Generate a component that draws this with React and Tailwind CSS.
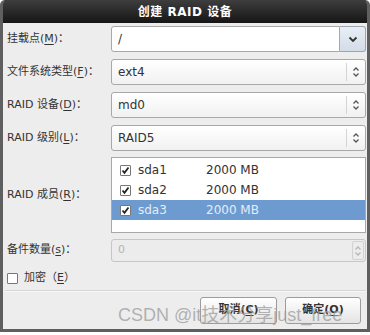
import React from "react";

const FONT = { fontFamily: '"DejaVu Sans", "Noto Sans CJK SC", sans-serif' };

function Mn({ c }) {
  return <span className="underline underline-offset-[2px]">{c}</span>;
}

function UpDown({ color = "#555" }) {
  return (
    <svg width="8" height="12" viewBox="0 0 8 12">
      <path d="M1.5 4.5 L4 2 L6.5 4.5" fill="none" stroke={color} strokeWidth="1.3" />
      <path d="M1.5 7.5 L4 10 L6.5 7.5" fill="none" stroke={color} strokeWidth="1.3" />
    </svg>
  );
}

function Combo({ value }) {
  return (
    <div className="h-[26px] flex items-center rounded-[3px] border border-[#a8a8a8] bg-gradient-to-b from-white to-[#f1f1f1] shadow-[inset_0_1px_0_#ffffff]">
      <span className="flex-1 pl-[6px] text-[12px] text-[#333]">{value}</span>
      <div className="w-px h-[18px] bg-[#d4d4d4]" />
      <div className="w-[18px] flex justify-center items-center">
        <UpDown />
      </div>
    </div>
  );
}

function Check({ checked }) {
  return (
    <div className="w-[11px] h-[11px] border border-[#777] bg-white flex items-center justify-center rounded-[1px]">
      {checked && (
        <svg width="9" height="9" viewBox="0 0 9 9">
          <path d="M1.5 4.5 L3.5 6.8 L7.5 1.5" fill="none" stroke="#222" strokeWidth="1.8" />
        </svg>
      )}
    </div>
  );
}

function Row({ label, children, h = "h-[26px]", mt }) {
  return (
    <div className={`flex items-center ${mt}`}>
      <div className="w-[106px] pl-[2px] text-[11px] text-[#333] whitespace-nowrap">{label}</div>
      <div className={`flex-1 ${h}`}>{children}</div>
    </div>
  );
}

function ListRow({ name, size, selected }) {
  return (
    <div className={`h-[20px] flex items-center ${selected ? "bg-[#6d9bd0] text-[#e4ecf6]" : "text-[#333]"}`}>
      <div className="w-[25px] flex justify-center pl-[1px]">
        <Check checked />
      </div>
      <span className="w-[69px] text-[12px] pl-[1px]">{name}</span>
      <span className="text-[12px]">{size}</span>
    </div>
  );
}

export default function App() {
  return (
    <div className="w-[370px] h-[335px] bg-white relative overflow-hidden" style={FONT}>
      <div className="h-[332px] flex flex-col rounded-t-[5px] border-x-[3px] border-b-[3px] border-[#5f5f5f] bg-[#ededed] overflow-hidden">
        <div className="h-[23px] shrink-0 bg-gradient-to-b from-[#3e3e3e] to-[#161616] flex items-center justify-center">
          <span className="text-white text-[12px] font-bold tracking-[0.5px]">创建 RAID 设备</span>
        </div>
        <div className="flex flex-col pl-[2px] pr-[1px]">
          <Row mt="mt-[3px]" label={<>挂载点(<Mn c="M" />)：</>}>
            <div className="h-full flex">
              <div className="flex-1 flex items-center rounded-l-[3px] border border-[#a8a8a8] bg-white pl-[6px] text-[12px] text-[#333]">/</div>
              <div className="w-[26px] flex items-center justify-center rounded-r-[3px] border border-l-0 border-[#9aa6b4] bg-gradient-to-b from-[#e8eef5] to-[#d3dde8]">
                <svg width="10" height="7" viewBox="0 0 10 7">
                  <path d="M1.5 1.5 L5 5 L8.5 1.5" fill="none" stroke="#333" strokeWidth="1.8" />
                </svg>
              </div>
            </div>
          </Row>
          <Row mt="mt-[7px]" label={<>文件系统类型(<Mn c="F" />)：</>}>
            <Combo value="ext4" />
          </Row>
          <Row mt="mt-[7px]" label={<>RAID 设备(<Mn c="D" />)：</>}>
            <Combo value="md0" />
          </Row>
          <Row mt="mt-[7px]" label={<>RAID 级别(<Mn c="L" />)：</>}>
            <Combo value="RAID5" />
          </Row>
          <Row mt="mt-[6px]" h="h-[76px]" label={<>RAID 成员(<Mn c="R" />)：</>}>
            <div className="h-full border border-[#a8a8a8] bg-white pt-[2px]">
              <ListRow name="sda1" size="2000 MB" />
              <ListRow name="sda2" size="2000 MB" />
              <ListRow name="sda3" size="2000 MB" selected />
            </div>
          </Row>
          <Row mt="mt-[6px]" h="h-[23px]" label={<>备件数量(<Mn c="s" />)：</>}>
            <div className="h-full flex items-center rounded-[3px] border border-[#c6c6c6] bg-[#ececec]">
              <span className="flex-1 pl-[6px] text-[11px] text-[#b5b5b5]">0</span>
              <div className="w-[12px] h-[19px] mr-[1px] border border-[#d2d2d2] rounded-[2px] flex items-center justify-center">
                <UpDown color="#b8b8b8" />
              </div>
            </div>
          </Row>
          <div className="mt-[10px] flex items-center pl-[2px] h-[12px]">
            <Check />
            <span className="ml-[6px] text-[11px] text-[#333]">加密（<Mn c="E" />）</span>
          </div>
          <div className="mt-[6px] h-[2px] border-t border-[#d6d6d6] bg-white/60" />
          <div className="mt-[5px] flex justify-end gap-[8px] pr-[5px]">
            <button className="w-[77px] h-[27px] rounded-[3px] border border-[#9c9c9c] bg-gradient-to-b from-white to-[#e4e4e4] text-[11px] font-bold text-[#333]">
              取消(<Mn c="C" />)
            </button>
            <button className="w-[76px] h-[27px] rounded-[3px] border border-[#9c9c9c] bg-gradient-to-b from-white to-[#e4e4e4] text-[11px] font-bold text-[#333]">
              确定(<Mn c="O" />)
            </button>
          </div>
        </div>
      </div>
      <div
        className="absolute left-[118px] top-[306px] text-[18px] text-[#9c9c9c]/75 whitespace-nowrap leading-none"
        style={{ fontFamily: '"Liberation Sans", "Noto Sans CJK SC", sans-serif' }}
      >
        CSDN @it技术分享just_free
      </div>
    </div>
  );
}
